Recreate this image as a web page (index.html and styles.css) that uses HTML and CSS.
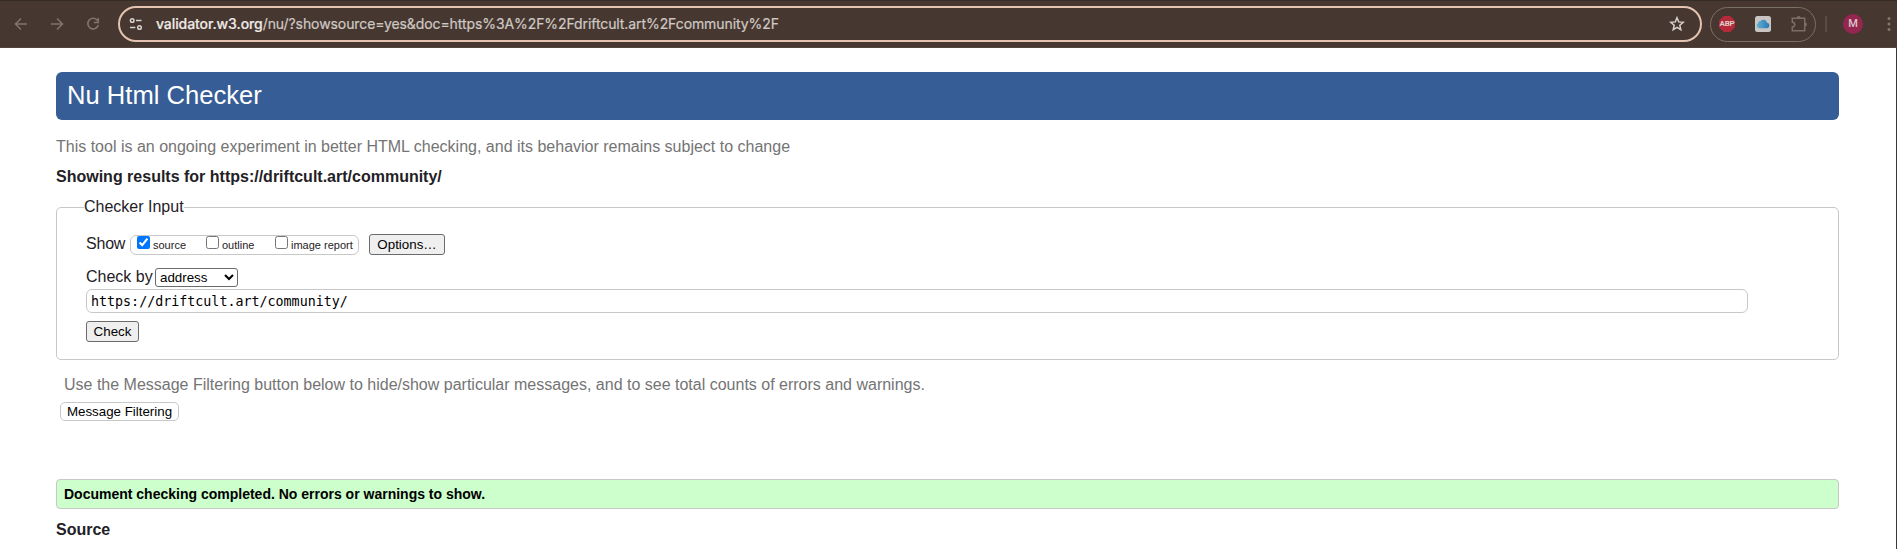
FILE: index.html
```html
<!DOCTYPE html>
<html lang="en">
<head>
<meta charset="utf-8">
<title>Nu Html Checker</title>
<link rel="stylesheet" href="styles.css">
</head>
<body>
<div class="toolbar">
  <div class="nav">
    <svg width="14" height="14" viewBox="0 0 14 14"><path d="M13 7H1.500M7 1.500L1.500 7L7 12.500"/></svg>
    <svg width="14" height="14" viewBox="0 0 14 14"><path d="M1 7H12.500M7 1.500L12.500 7L7 12.500"/></svg>
    <svg width="14" height="14" viewBox="0 0 14 14"><path d="M11.700 3.800A5.300 5.300 0 1 0 12.300 8M12.300 1V5.500H7.800"/></svg>
  </div>
  <div class="omnibox">
    <svg class="tune" width="14" height="14" viewBox="0 0 14 14"><circle cx="3.200" cy="3.500" r="1.800"/><path d="M7 3.500H12.500M1 10.500H6.300"/><circle cx="10.500" cy="10.500" r="1.800"/></svg>
    <span class="url"><b>validator.w3.org</b>/nu/?showsource=yes&amp;doc=https%3A%2F%2Fdriftcult.art%2Fcommunity%2F</span>
    <svg class="star" width="16" height="16" viewBox="0 0 16 16"><path d="M8 1.800L9.700 5.900L14.200 6.300L10.800 9.200L11.800 13.600L8 11.300L4.200 13.600L5.200 9.200L1.800 6.300L6.300 5.900Z"/></svg>
  </div>
  <div class="extensions">
    <span class="abp">ABP</span>
    <svg class="cloud" width="16" height="16" viewBox="0 0 16 16">
      <defs><linearGradient id="sky" x1="0" x2="1"><stop offset="0" stop-color="#64b0cf"/><stop offset="1" stop-color="#2878b8"/></linearGradient></defs>
      <rect width="16" height="16" rx="2.500" fill="#c9c5c2"/>
      <path fill="url(#sky)" d="M4 12.200A2.700 2.700 0 0 1 3 7.200A2 2 0 0 1 5.300 5.200A3.800 3.800 0 0 1 12 6.700A2.800 2.800 0 0 1 12.300 12.200Z"/>
    </svg>
    <svg class="puzzle" width="18" height="18" viewBox="0 0 18 18"><path d="M2.300 3.200H14.700V15.800H2.300V12A2.400 2.400 0 0 0 2.300 7.200Z"/><path class="knob" d="M6.800 3A1.900 1.900 0 0 1 10.600 3ZM15 7.500A1.900 1.900 0 0 1 15 11.300Z"/></svg>
  </div>
  <span class="divider"></span>
  <span class="avatar">M</span>
  <svg class="kebab" width="4" height="16" viewBox="0 0 4 16"><circle cx="2" cy="2.500" r="1.500"/><circle cx="2" cy="8" r="1.500"/><circle cx="2" cy="13.500" r="1.500"/></svg>
</div>
<main class="page">
  <h1 class="banner">Nu Html Checker</h1>
  <p class="tagline">This tool is an ongoing experiment in better HTML checking, and its behavior remains subject to change</p>
  <h2 class="results">Showing results for https://driftcult.art/community/</h2>
  <fieldset class="checker">
    <legend>Checker Input</legend>
    <div class="show-row">
      <span class="show-label">Show</span>
      <div class="options">
        <label><input type="checkbox" checked>source</label>
        <label><input type="checkbox">outline</label>
        <label><input type="checkbox">image report</label>
      </div>
      <button class="btn btn-options">Options…</button>
    </div>
    <div class="by-row">
      <span>Check by</span>
      <select class="mode"><option>address</option></select>
    </div>
    <input class="address" type="text" value="https://driftcult.art/community/">
    <button class="btn btn-check">Check</button>
  </fieldset>
  <p class="hint">Use the Message Filtering button below to hide/show particular messages, and to see total counts of errors and warnings.</p>
  <button class="filtering">Message Filtering</button>
  <p class="success">Document checking completed. No errors or warnings to show.</p>
  <h3 class="source">Source</h3>
</main>
</body>
</html>
```

FILE: styles.css
```css
* { box-sizing: border-box; }
body {
  margin: 0;
  height: 549px;
  overflow: hidden;
  background: #fff;
  color: #1f2126;
  font: 16px/20px "Liberation Sans", Arial, sans-serif;
}
h1, h2, h3, p { margin: 0; }
svg { flex: none; fill: none; }

.toolbar {
  display: flex;
  align-items: center;
  height: 48px;
  background: #463831;
  border-top: 1px solid #352c28;
  border-bottom: 1px solid #51443d;
  color: #d0c8c3;
  font-family: Inter, sans-serif;
}
.nav { display: flex; gap: 22px; width: 118px; padding-left: 14px; }
.nav svg { stroke: #7f746d; stroke-width: 1.6; }
.omnibox {
  display: flex;
  align-items: center;
  width: 1584px;
  height: 36px;
  padding: 0 15px 0 9px;
  border: 2px solid #e5c3b1;
  border-radius: 18px;
}
.tune { stroke: #d8d0cb; stroke-width: 1.5; }
.url { margin-left: 13px; flex: 1; font-size: 14px; letter-spacing: -0.085px; white-space: nowrap; -webkit-text-stroke: 0.2px; }
.url b { font-weight: 500; color: #efe9e5; }
.star { stroke: #d8d0cb; stroke-width: 1.5; }
.extensions {
  display: flex;
  align-items: center;
  width: 106px;
  height: 35px;
  margin-left: 8px;
  padding-left: 8px;
  border: 1px solid #7b6f66;
  border-radius: 18px;
}
.abp {
  width: 16px;
  height: 16px;
  background: #b52a3a;
  clip-path: polygon(30% 0, 70% 0, 100% 30%, 100% 70%, 70% 100%, 30% 100%, 0 70%, 0 30%);
  color: #dccfca;
  font: bold 8px/16px Roboto, sans-serif;
  letter-spacing: -0.2px;
  text-align: center;
}
.cloud { margin-left: 20px; }
.puzzle { margin-left: 19px; stroke: #7b6f66; stroke-width: 1.5; }
.puzzle .knob { fill: #7b6f66; stroke: none; }
.divider { width: 2px; height: 16px; margin-left: 9px; background: #5b4d45; }
.avatar {
  width: 20px;
  height: 20px;
  margin-left: 16px;
  border-radius: 50%;
  background: #96264f;
  color: #d6c8cb;
  font: 500 11px/20px Roboto, sans-serif;
  text-align: center;
}
.kebab { margin-left: 24px; fill: #83776f; }

.page {
  height: 501px;
  padding: 24px 57px 0 56px;
  border-right: 1px solid #38393b;
}
.banner {
  height: 48px;
  padding-left: 11px;
  border-radius: 6px;
  background: #365d95;
  color: #fff;
  font-size: 25.6px;
  font-weight: 400;
  line-height: 46px;
}
.tagline { margin-top: 17px; color: #747474; }
.results { margin-top: 10px; font-size: 16px; line-height: 20px; }
.checker {
  display: block;
  height: 163px;
  margin: 10px 0 0;
  padding: 17px 90px 0 29px;
  border: 1px solid #c8c8c8;
  border-radius: 5px;
}
.checker legend { margin-left: -2px; padding: 0; }
.show-row { display: flex; align-items: flex-start; height: 34px; }
.show-label { width: 44px; letter-spacing: -0.2px; }
.options {
  display: flex;
  width: 229px;
  height: 20px;
  margin-top: 1px;
  padding-left: 6px;
  border: 1px solid #c8c8c8;
  border-radius: 6px;
  font-size: 11px;
  line-height: 19px;
}
.options label { display: flex; width: 69px; white-space: nowrap; }
.options input { width: 13px; height: 13px; margin: 0 3px 0 0; flex: none; }
.btn {
  height: 21px;
  padding: 0;
  border: 1px solid #6b6b6b;
  border-radius: 3px;
  background: #efefef;
  color: #000;
  font: 13.333px/17px "Liberation Sans", Arial, sans-serif;
}
.btn-options { width: 76px; margin-left: 10px; }
.by-row { display: flex; height: 21px; line-height: 18px; }
.by-row span { width: 69px; white-space: nowrap; }
.mode {
  width: 83px;
  height: 19px;
  border: 1px solid #6b6b6b;
  border-radius: 3px;
  background: #fff;
  color: #000;
  font: 13.333px "Liberation Sans", Arial, sans-serif;
}
.address {
  display: block;
  width: 100%;
  height: 24px;
  padding: 0 4px;
  border: 1px solid #c8c8c8;
  border-radius: 6px;
  outline: 0;
  color: #000;
  font: 13.333px "DejaVu Sans Mono", monospace;
}
.btn-check { display: block; width: 53px; margin-top: 8px; }
.hint { margin: 15px 0 0 8px; color: #747474; }
.filtering {
  display: block;
  width: 119px;
  height: 19px;
  margin: 7px 0 0 4px;
  padding: 0;
  border: 1px solid #c8c8c8;
  border-radius: 5px;
  background: #fff;
  color: #000;
  font: 13.333px/17px "Liberation Sans", Arial, sans-serif;
}
.success {
  height: 30px;
  margin-top: 58px;
  padding-left: 7px;
  border: 1px solid #c8c8c8;
  border-radius: 4px;
  background: #cfc;
  color: #000;
  font-size: 14px;
  font-weight: 700;
  line-height: 28px;
}
.source { margin-top: 11px; font-size: 16px; line-height: 20px; }
```
